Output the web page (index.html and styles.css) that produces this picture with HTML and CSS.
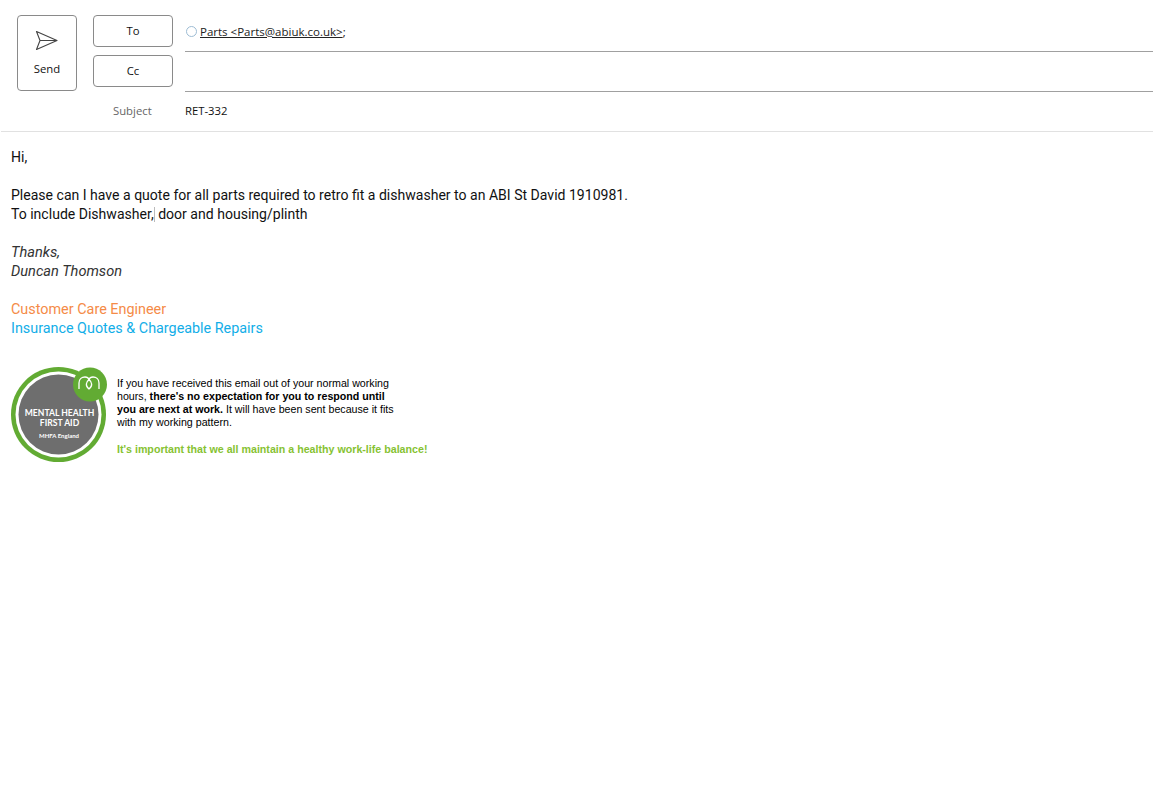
FILE: index.html
```html
<!DOCTYPE html>
<html lang="en">
<head>
  <meta charset="UTF-8">
  <title>RET-332 - Message</title>
  <link rel="stylesheet" href="styles.css">
</head>
<body>
  <header class="compose">
    <button class="send-btn">
      <svg class="send-icon" width="24" height="20" viewBox="0 0 24 20">
        <path d="M1.5 0.5 L22 9.5 L1.5 18.5 L5 9.5 Z M5 9.5 H22" fill="none" stroke="#444" stroke-width="1.1" stroke-linejoin="round"/>
      </svg>
      <span>Send</span>
    </button>
    <div class="fields">
      <div class="field-row">
        <button class="addr-btn">To</button>
        <div class="field-value">
          <span class="status-dot"></span>
          <span class="recipient"><u>Parts &lt;Parts@abiuk.co.uk&gt;</u>;</span>
        </div>
      </div>
      <div class="field-row">
        <button class="addr-btn">Cc</button>
        <div class="field-value"></div>
      </div>
      <div class="subject-row">
        <span class="subject-label">Subject</span>
        <span class="subject-value">RET-332</span>
      </div>
    </div>
  </header>

  <main class="message">
    <p>Hi,</p>
    <p class="blank"></p>
    <p>Please can I have a quote for all parts required to retro fit a dishwasher to an ABI St David 1910981.</p>
    <p>To include Dishwasher,<span class="caret"></span> door and housing/plinth</p>
    <p class="blank"></p>
    <p class="sign">Thanks,</p>
    <p class="sign">Duncan Thomson</p>
    <p class="blank"></p>
    <p class="job">Customer Care Engineer</p>
    <p class="team">Insurance Quotes &amp; Chargeable Repairs</p>

    <div class="banner">
      <svg class="badge" width="96" height="96" viewBox="0 0 96 96">
        <circle cx="47.5" cy="48.5" r="47.5" fill="#62ab33"/>
        <circle cx="47.5" cy="48.5" r="43" fill="#fff"/>
        <circle cx="47.5" cy="48.5" r="40" fill="#6e6e6e"/>
        <circle cx="79" cy="18.5" r="17" fill="#62ab33"/>
        <path d="M68 23 V17 C68 13 71 11 74 11 C76 11 77.5 12 78 13.5 C78.5 12 80 11 82 11 C85 11 88 13 88 17 V23 M78 13.5 C75 16 74 20 78 23 C82 20 81 16 78 13.5" fill="none" stroke="#fff" stroke-width="1.3"/>
        <text class="badge-title" x="48.5" y="49.5">MENTAL HEALTH</text>
        <text class="badge-title" x="48.5" y="60">FIRST AID</text>
        <text class="badge-sub" x="48" y="72">MHFA England</text>
      </svg>
      <div class="banner-text">
        <p>If you have received this email out of your normal working<br>
        hours, <b>there's no expectation for you to respond until<br>
        you are next at work.</b> It will have been sent because it fits<br>
        with my working pattern.</p>
        <p class="balance">It's important that we all maintain a healthy work-life balance!</p>
      </div>
    </div>
  </main>
</body>
</html>
```

FILE: styles.css
```css
* {
  box-sizing: border-box;
}

html, body {
  margin: 0;
  background: #fff;
}

body {
  font-family: "Open Sans", "Noto Sans", sans-serif;
  color: #111;
}

button {
  font-family: "Open Sans", "Noto Sans", sans-serif;
  background: #fff;
  border: 1px solid #8a8a8a;
  border-radius: 4px;
  padding: 0;
  color: #111;
  font-size: 11.3px;
}

.compose {
  display: flex;
  height: 132px;
  padding: 15px 0 0 17px;
  border-bottom: 1px solid #e1e1e1;
  margin-left: 1px;
}

.send-btn {
  width: 60px;
  height: 76px;
  margin-left: -1px;
  display: flex;
  flex-direction: column;
  align-items: center;
  padding-top: 15px;
  flex: none;
}

.send-icon {
  display: block;
  margin-bottom: 10px;
}

.fields {
  flex: 1;
  margin-left: 16px;
}

.field-row {
  display: flex;
  height: 40px;
  gap: 12px;
}

.addr-btn {
  width: 80px;
  height: 32px;
  flex: none;
  padding-bottom: 2px;
}

.field-value {
  flex: 1;
  height: 37px;
  border-bottom: 1px solid #a0a0a0;
  display: flex;
  align-items: center;
  font-size: 11.5px;
  color: #222;
  padding-bottom: 4px;
}

.status-dot {
  width: 11px;
  height: 11px;
  border: 1px solid #9dbcd4;
  border-radius: 50%;
  margin: 0 3px 0 1px;
}

.subject-row {
  display: flex;
  font-size: 11.3px;
  height: 30px;
  align-items: center;
}

.subject-label {
  width: 92px;
  padding-left: 20px;
  color: #666;
}

.message {
  padding: 16px 11px 0;
  font-family: Roboto, "Open Sans", sans-serif;
  font-size: 14.05px;
  line-height: 19px;
  color: #111;
}

.message p {
  margin: 0;
}

.message .blank {
  height: 19px;
}

.message .sign {
  font-size: 14.6px;
  font-style: italic;
  color: #333;
}

.message .job {
  font-size: 14.4px;
  color: #f58b47;
}

.message .team {
  font-size: 14.35px;
  color: #12aee8;
}

.caret {
  display: inline-block;
  width: 0;
  height: 15px;
  border-left: 1px solid #bbb;
  vertical-align: -3px;
}

.banner {
  display: flex;
  margin-top: 28px;
  gap: 10px;
}

.badge {
  flex: none;
  display: block;
}

.badge-title {
  font-family: "Lato", sans-serif;
  font-size: 8.6px;
  font-weight: 700;
  fill: #fff;
  text-anchor: middle;
}

.badge-sub {
  font-family: "Lato", sans-serif;
  font-size: 6px;
  font-weight: 700;
  fill: #fff;
  text-anchor: middle;
}

.banner-text {
  font-family: "Liberation Sans", Arial, sans-serif;
  font-size: 10.67px;
  line-height: 13px;
  color: #000;
  padding-top: 11px;
}

.message .balance {
  margin-top: 14px;
  font-weight: 700;
  color: #86c232;
}
```
